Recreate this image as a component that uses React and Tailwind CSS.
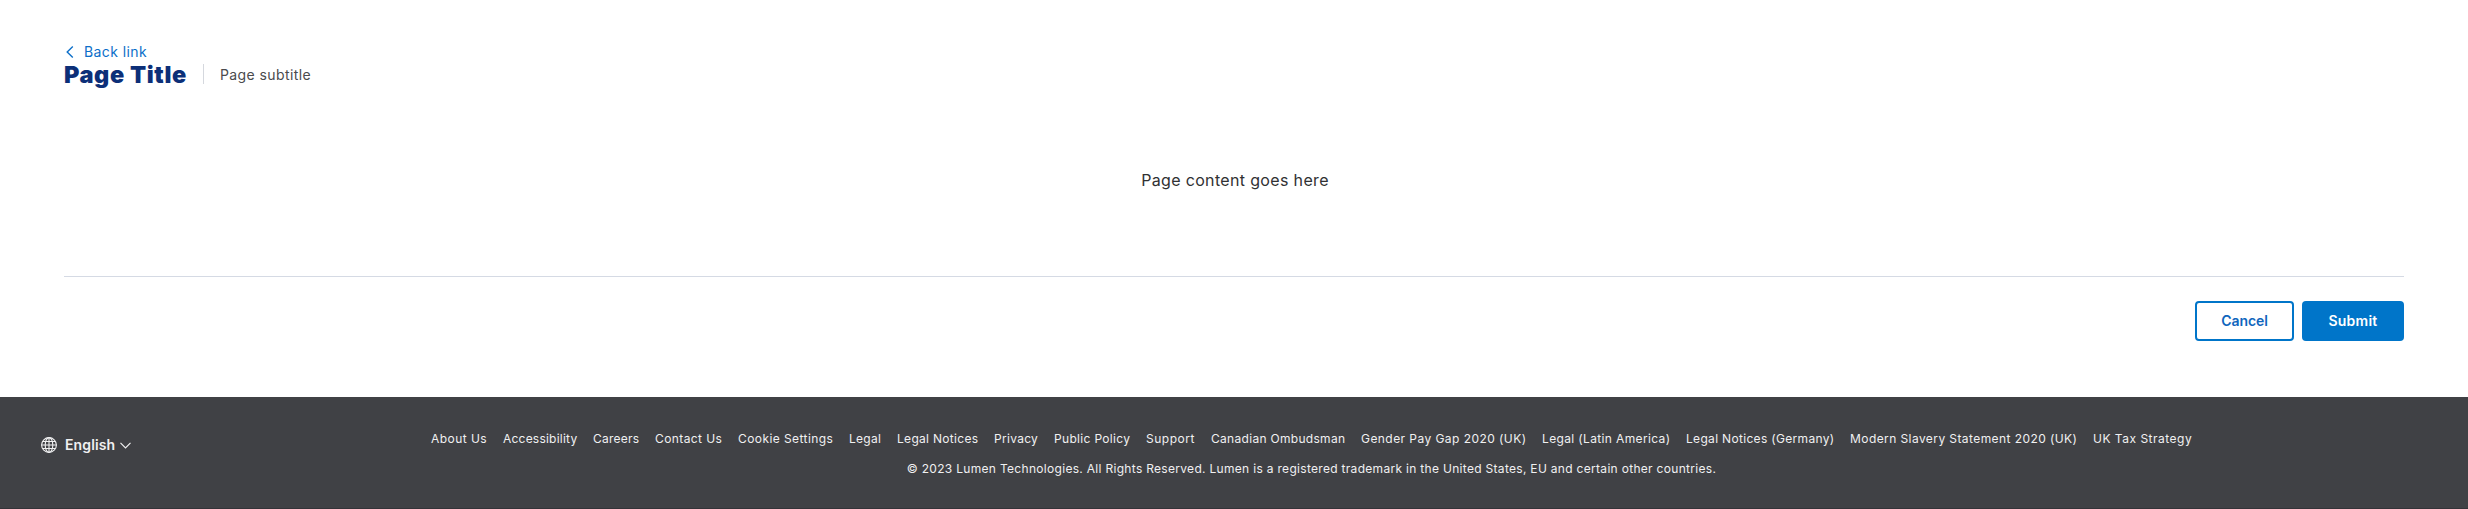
const footerLinks = [
  { label: 'About Us', className: 'w-[56px] tracking-[0.46px]' },
  { label: 'Accessibility', className: 'w-[74px] tracking-[0.22px]' },
  { label: 'Careers', className: 'w-[46px] tracking-[0.24px]' },
  { label: 'Contact Us', className: 'w-[67px] tracking-[0.4px]' },
  { label: 'Cookie Settings', className: 'w-[95px] tracking-[0.42px]' },
  { label: 'Legal', className: 'w-[32px] tracking-[0.26px]' },
  { label: 'Legal Notices', className: 'w-[81px] tracking-[0.3px]' },
  { label: 'Privacy', className: 'w-[44px] tracking-[0.3px]' },
  { label: 'Public Policy', className: 'w-[76px] tracking-[0.32px]' },
  { label: 'Support', className: 'w-[49px] tracking-[0.5px]' },
  { label: 'Canadian Ombudsman', className: 'w-[134px] tracking-[0.3px]' },
  { label: 'Gender Pay Gap 2020 (UK)', className: 'w-[165px] tracking-[0.44px]' },
  { label: 'Legal (Latin America)', className: 'w-[128px] tracking-[0.36px]' },
  { label: 'Legal Notices (Germany)', className: 'w-[148px] tracking-[0.32px]' },
  { label: 'Modern Slavery Statement 2020 (UK)', className: 'w-[227px] tracking-[0.42px]' },
  { label: 'UK Tax Strategy', className: 'w-[99px] tracking-[0.5px]' },
];

function GlobeIcon() {
  return (
    <svg className="size-4 shrink-0" viewBox="0 0 16 16" fill="none" stroke="currentColor" strokeWidth="1.1">
      <circle cx="8" cy="8" r="7.4" />
      <ellipse cx="8" cy="8" rx="3.8" ry="7.4" />
      <path d="M8 .5v15M.5 8h15M1.6 4.5h12.8M1.6 11.5h12.8" />
    </svg>
  );
}

function PageHeader() {
  return (
    <header>
      <a href="#" className="flex h-5 w-fit items-center text-sm leading-5 tracking-[0.42px] text-[#0c6fc9]">
        <svg className="mr-[9px] ml-0.5 h-3 w-2" viewBox="0 0 8 12" fill="none" stroke="currentColor" strokeWidth="1.4">
          <path d="M6.8.5 1.2 6l5.6 5.5" />
        </svg>
        <span className="ml-px">Back link</span>
      </a>
      <div className="flex h-6 items-center">
        <h1 className="w-[139px] pt-0.5 text-[23.5px] leading-6 font-black tracking-[0.6px] text-[#0c2f78]">
          Page Title
        </h1>
        <p className="flex h-5 items-center border-l border-[#d5d8de] pt-px pl-4 text-sm leading-5 tracking-[0.4px] text-[#4a4b4d]">
          Page subtitle
        </p>
      </div>
    </header>
  );
}

function Footer() {
  return (
    <footer className="flex h-28 border-b border-[#343338] bg-[#404145] text-[#f0f0f1]">
      <button className="mt-[38px] ml-[41px] flex h-5 w-[100px] shrink-0 items-center text-sm leading-5 font-semibold">
        <GlobeIcon />
        <span className="ml-2 w-[55px] text-left tracking-[0.12px]">English</span>
        <svg className="h-[7px] w-[11px]" viewBox="0 0 11 7" fill="none" stroke="currentColor" strokeWidth="1.2">
          <path d="M.5.8 5.5 5.8l5-5" />
        </svg>
      </button>
      <div className="ml-[290px] w-[1761px] pt-[30px] text-xs">
        <nav className="flex h-6 items-center gap-4 whitespace-nowrap">
          {footerLinks.map(({ label, className }) => (
            <a key={label} href="#" className={`shrink-0 ${className}`}>
              {label}
            </a>
          ))}
        </nav>
        <p className="mt-1.5 h-6 text-center leading-6 tracking-[0.305px]">
          © 2023 Lumen Technologies. All Rights Reserved. Lumen is a registered trademark in the United States, EU and
          certain other countries.
        </p>
      </div>
    </footer>
  );
}

export default function App() {
  return (
    <div className="flex h-[509px] flex-col justify-between overflow-hidden bg-white font-['Inter',sans-serif]">
      <div className="px-16 pt-[42px]">
        <PageHeader />
        <main className="flex h-[190px] items-center justify-center pb-0.5 pl-[2px] text-base tracking-[0.34px] text-[#303133]">
          Page content goes here
        </main>
        <div className="flex justify-end gap-2 border-t border-[#d5dae4] pt-6">
          <button className="h-10 w-[99px] rounded border-2 border-[#0075c9] text-sm font-semibold tracking-[-0.1px] text-[#0f66bd]">
            Cancel
          </button>
          <button className="h-10 w-[102px] rounded bg-[#0075c9] text-sm font-semibold tracking-[0.25px] text-white">
            Submit
          </button>
        </div>
      </div>
      <Footer />
    </div>
  );
}
